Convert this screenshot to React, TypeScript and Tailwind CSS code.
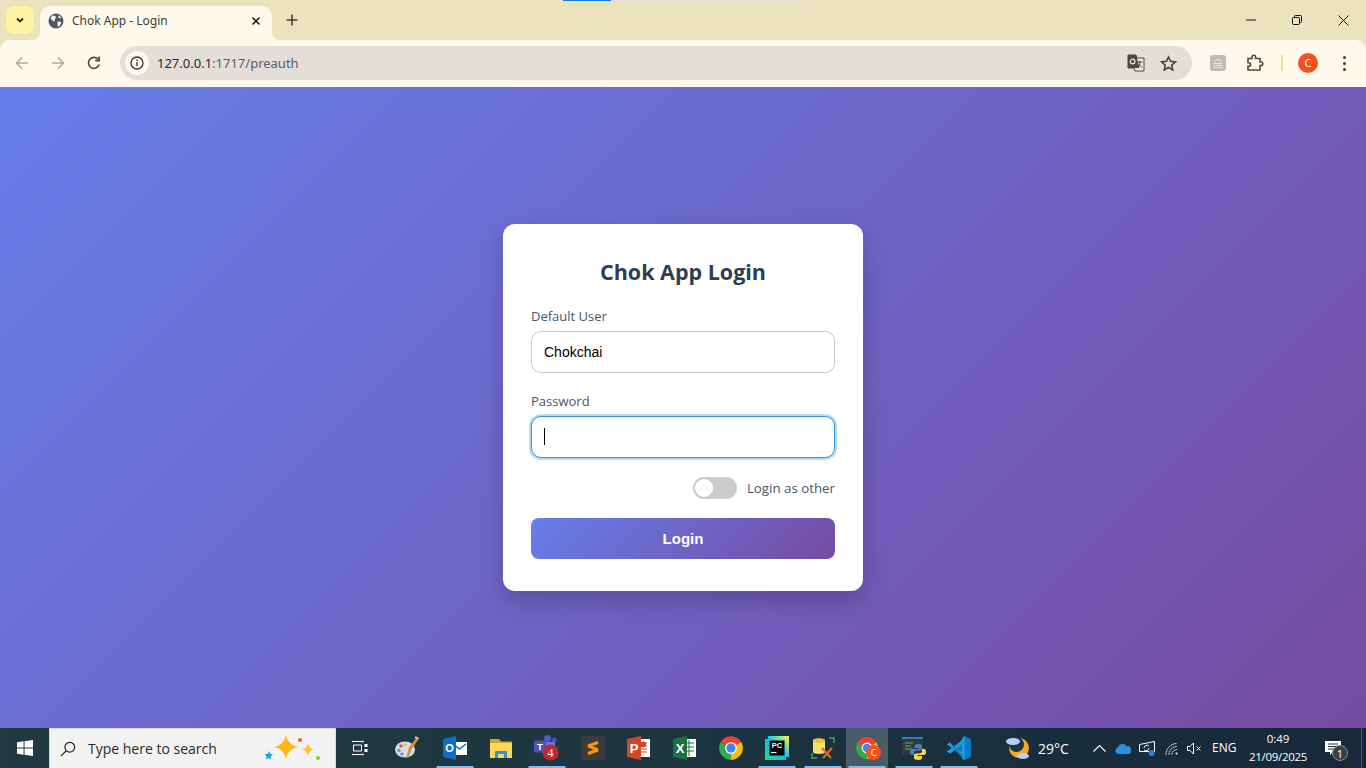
import React from "react";

const UI_FONT = "font-['Open_Sans','Noto_Sans',sans-serif]";

function ChromeLogo({ size = 26 }: { size?: number }) {
  return (
    <svg width={size} height={size} viewBox="0 0 24 24">
      <path d="M12 12L2.5 6.5A11 11 0 0 1 21.5 6.5Z" fill="#ea4335" />
      <path d="M12 12L21.5 6.5A11 11 0 0 1 12 23Z" fill="#fbbc04" />
      <path d="M12 12L12 23A11 11 0 0 1 2.5 6.5Z" fill="#34a853" />
      <circle cx="12" cy="12" r="5.4" fill="#fff" />
      <circle cx="12" cy="12" r="4.3" fill="#4285f4" />
    </svg>
  );
}

function TabStrip() {
  return (
    <div className="relative flex h-10 items-end bg-[#ebe3bd]">
      {/* page load progress at the very top of the window */}
      <div className="absolute left-[563px] top-0 h-px w-12 bg-[#0b7fd6]" />
      <div className="absolute left-[611px] top-0 h-px w-[193px] bg-[#dcdcdc]" />

      <div className="mb-[6px] ml-[6px] flex h-7 w-7 items-center justify-center rounded-lg bg-[#fdf4a3]">
        <svg width="12" height="12" viewBox="0 0 12 12" fill="none" stroke="#2b2a20" strokeWidth="1.8">
          <path d="M3 4.5l3 3 3-3" />
        </svg>
      </div>

      <div className="relative ml-[6px] flex h-[34px] w-[232px] items-center rounded-t-[10px] bg-[#fef9ec] pb-[5px] pl-2 pr-[11px]">
        <div className="absolute -left-[8px] bottom-0 h-2 w-2 bg-[radial-gradient(circle_at_0_0,transparent_8px,#fef9ec_8.5px)]" />
        <div className="absolute -right-[8px] bottom-0 h-2 w-2 bg-[radial-gradient(circle_at_100%_0,transparent_8px,#fef9ec_8.5px)]" />
        <svg width="16" height="16" viewBox="0 0 16 16">
          <circle cx="8" cy="8" r="7.5" fill="#50566a" />
          <path d="M4.2 2.6l3 .4.8 1.8-1.6 1.6.6 1.6-1.6.2L2.6 5.4ZM9.4 8.4l3.4.4.6 1.2-2.4 3.4-1.2.4-.2-2.6Z M10.4 2.2l2.8 2-1 1.2-1.8-.8Z" fill="#fef9ec" />
        </svg>
        <span className="ml-2 flex-1 font-['Noto_Sans',sans-serif] text-[12px] text-[#3f3d33]">Chok App - Login</span>
        <svg width="10" height="10" viewBox="0 0 10 10" stroke="#28261c" strokeWidth="1.6">
          <path d="M1.5 1.5l7 7M8.5 1.5l-7 7" />
        </svg>
      </div>

      <div className="mb-[14px] ml-[14px] flex h-3 w-3 items-center justify-center">
        <svg width="12" height="12" viewBox="0 0 12 12" stroke="#46442f" strokeWidth="1.6">
          <path d="M6 .5v11M.5 6h11" />
        </svg>
      </div>

      <div className="ml-auto mb-[14px] flex h-3 items-center">
        <div className="flex w-[46px] justify-center">
          <svg width="10" height="10" viewBox="0 0 10 10" stroke="#111" strokeWidth="1">
            <path d="M0 5h10" />
          </svg>
        </div>
        <div className="flex w-[46px] justify-center">
          <svg width="10" height="10" viewBox="0 0 10 10" fill="none" stroke="#111" strokeWidth="1">
            <rect x=".5" y="2.5" width="7" height="7" rx="1" />
            <path d="M2.5 2.5V1.4a.9.9 0 0 1 .9-.9h5.2a.9.9 0 0 1 .9.9v5.2a.9.9 0 0 1-.9.9H7.5" />
          </svg>
        </div>
        <div className="flex w-[46px] justify-center">
          <svg width="11" height="11" viewBox="0 0 11 11" stroke="#111" strokeWidth="1">
            <path d="M.5.5l10 10M10.5.5l-10 10" />
          </svg>
        </div>
      </div>
    </div>
  );
}

function Toolbar() {
  return (
    <div className="bg-[#ebe3bd]">
      <div className="flex h-[47px] items-center rounded-t-[10px] bg-[#fef9ec] pb-px pl-1">
        <div className="flex w-9 justify-center">
          <svg width="16" height="16" viewBox="0 0 16 16" fill="none" stroke="#aeaa9d" strokeWidth="1.5">
            <path d="M14 8H2.5M8 2.5L2.5 8 8 13.5" />
          </svg>
        </div>
        <div className="flex w-9 justify-center">
          <svg width="16" height="16" viewBox="0 0 16 16" fill="none" stroke="#aeaa9d" strokeWidth="1.5">
            <path d="M2 8h11.5M8 2.5L13.5 8 8 13.5" />
          </svg>
        </div>
        <div className="flex w-9 justify-center">
          <svg width="16" height="16" viewBox="0 0 16 16" fill="none" stroke="#4d4a3a" strokeWidth="1.7">
            <path d="M13.2 9.6A5.5 5.5 0 1 1 12.4 4.6" />
            <path d="M13.2 1.6v4h-4" />
          </svg>
        </div>

        <div className="ml-2 flex h-[34px] flex-1 items-center rounded-full bg-[#e3dfd8] pl-[5px] pr-[15px]">
          <div className="flex h-6 w-6 items-center justify-center rounded-full bg-[#fef9ec]">
            <svg width="14" height="14" viewBox="0 0 14 14" fill="none" stroke="#38362a" strokeWidth="1.3">
              <circle cx="7" cy="7" r="6" />
              <path d="M7 6v4.2M7 3.6v1.3" />
            </svg>
          </div>
          <span className="ml-2 flex-1 pt-[2px] font-['Noto_Sans',sans-serif] text-[13px] text-[#56606c]">
            <span className="text-[#252a2e]">127.0.0.1</span>:1717/preauth
          </span>
          {/* translate */}
          <svg width="18" height="18" viewBox="0 0 18 18" className="mr-[15px]">
            <path d="M1 1h8l1 3h7v13H8l-1-3H1Z" fill="#eceae3" stroke="#4c4a3e" />
            <path d="M1 1h8l3.5 13H1Z" fill="#4c4a3e" />
            <circle cx="5.6" cy="7.5" r="2.3" fill="none" stroke="#eceae3" strokeWidth="1.2" />
            <path d="M11 8h4.5M13 7v1.5c0 2-1 3.5-2 4.5M12 10l3 3.5" fill="none" stroke="#4c4a3e" />
          </svg>
          <svg width="17" height="17" viewBox="0 0 24 24" fill="none" stroke="#45422f" strokeWidth="2.2">
            <path d="M12 2.8l2.9 6.2 6.7.8-5 4.6 1.4 6.6-6-3.4-6 3.4 1.4-6.6-5-4.6 6.7-.8Z" />
          </svg>
        </div>

        <div className="flex w-[174px] items-center">
          <div className="ml-[18px] flex h-4 w-4 flex-col items-center justify-center gap-px rounded-[3px] bg-[#bdbbb6]">
            <div className="h-[3px] w-[6px] rounded-t-sm border border-b-0 border-[#e5e3de]" />
            <div className="h-px w-[10px] bg-[#e5e3de]" />
            <div className="h-px w-[10px] bg-[#e5e3de]" />
            <div className="h-px w-[10px] bg-[#e5e3de]" />
          </div>
          <svg width="18" height="18" viewBox="0 0 18 18" fill="none" stroke="#4d4a36" strokeWidth="1.6" className="ml-[20px]">
            <path d="M2 4.5h4V3a1.8 1.8 0 0 1 3.6 0v1.5h4.4V8h1a1.8 1.8 0 0 1 0 3.6h-1V16H2v-3.6h.8a1.8 1.8 0 0 0 0-3.6H2Z" />
          </svg>
          <div className="ml-[17px] h-4 w-[2px] bg-[#f5e08a]" />
          <div className="ml-[15px] flex h-5 w-5 items-center justify-center rounded-full bg-[#f4511e] font-['Noto_Sans',sans-serif] text-[11px] text-white">
            C
          </div>
          <div className="ml-[25px] flex flex-col gap-[3px]">
            <div className="h-[3px] w-[3px] rounded-full bg-[#3e3c2e]" />
            <div className="h-[3px] w-[3px] rounded-full bg-[#3e3c2e]" />
            <div className="h-[3px] w-[3px] rounded-full bg-[#3e3c2e]" />
          </div>
        </div>
      </div>
    </div>
  );
}

function LoginCard() {
  return (
    <div className={`w-[360px] rounded-xl bg-white px-7 pb-8 pt-7 shadow-[0_10px_25px_rgba(0,0,0,0.2)] ${UI_FONT}`}>
      <h1 className="mb-[15px] h-10 text-center text-[21.500px] font-bold leading-10 text-[#2c3e50]">Chok App Login</h1>
      <label className="mb-[5px] block h-[19px] text-[13px] leading-[19px] text-[#4a5568]">Default User</label>
      <input
        readOnly
        value="Chokchai"
        className="mb-[19px] block h-[42px] w-full rounded-[10px] border border-[#c4c6cc] bg-white px-3 font-['Liberation_Sans',sans-serif] text-[14px] text-black outline-none"
      />
      <label className="mb-[5px] block h-[19px] text-[13px] leading-[19px] text-[#4a5568]">Password</label>
      <div className="relative mb-[19px]">
        <input
          readOnly
          type="password"
          className="block h-[42px] w-full rounded-[10px] border border-[#3498db] bg-white px-3 text-[14px] outline-none shadow-[0_0_0_2px_rgba(52,152,219,0.35)]"
        />
        <div className="absolute left-[13px] top-[12px] h-[17px] w-px bg-black" />
      </div>
      <div className="mb-5 flex h-[21px] items-center justify-end">
        <div className="flex h-[22px] w-11 items-center rounded-full bg-[#cccccc] pl-[2px]">
          <div className="h-[18px] w-[18px] rounded-full bg-white" />
        </div>
        <span className="ml-[10px] mt-[2px] text-[13.3px] text-[#4a5568]">Login as other</span>
      </div>
      <button className="block h-[41px] w-full rounded-lg bg-[linear-gradient(135deg,#667eea_0%,#764ba2_100%)] pt-px font-['Liberation_Sans',sans-serif] text-[15px] font-bold text-white">
        Login
      </button>
    </div>
  );
}

function TaskButton({
  width,
  underline,
  active,
  children,
}: {
  width: string;
  underline?: boolean;
  active?: boolean;
  children: React.ReactNode;
}) {
  return (
    <div className={`relative flex h-10 shrink-0 items-center justify-center ${width} ${active ? "bg-[#4a5c68]" : ""}`}>
      {children}
      {underline && <div className="absolute bottom-0 left-1/2 h-[2px] w-[37px] -translate-x-1/2 bg-[#7fbdea]" />}
    </div>
  );
}

function Taskbar() {
  return (
    <div className={`flex h-10 items-center bg-[linear-gradient(90deg,#1f3a42_0%,#1d3640_45%,#16283a_100%)] text-white ${UI_FONT}`}>
      <div className="flex h-10 w-[49px] shrink-0 items-center justify-center">
        <svg width="16" height="16" viewBox="0 0 17 17" fill="#fff">
          <path d="M0 2.4l7-1v6.7H0ZM8 1.2L17 0v8.1H8ZM0 9h7v6.7l-7-1ZM8 9h9v8l-9-1.2Z" />
        </svg>
      </div>
      <div className="flex h-10 w-[287px] shrink-0 items-center border border-b-0 border-[#d9d9d9] bg-[#f2f2f2] pl-[10px]">
        <svg width="16" height="16" viewBox="0 0 18 18" fill="none" stroke="#222" strokeWidth="1.3">
          <circle cx="11" cy="7" r="5.5" />
          <path d="M7 11l-6 6" />
        </svg>
        <span className="ml-[12px] text-[14px] text-[#2a2a2a]">Type here to search</span>
        <svg width="64" height="30" viewBox="0 0 64 30" className="ml-[44px]">
          <path d="M25 1Q27 11 37 13Q27 15 25 25Q23 15 13 13Q23 11 25 1Z" fill="#fdb913" />
          <path d="M47 9Q48 14.500 53 15.500Q48 16.500 47 22Q46 16.500 41 15.500Q46 14.500 47 9Z" fill="#fdc02f" />
          <path d="M8 17l1 2.800 3 .7-2.300 1.800.4 3.200-2.500-1.600-2.700 1.500.7-3-2.100-2.200 3-.3Z" fill="#1fa2ea" />
          <circle cx="39" cy="6" r="2" fill="#e8622a" />
          <circle cx="57" cy="24" r="2" fill="#8cc63f" />
        </svg>
      </div>

      <TaskButton width="w-[47px]">
        <svg width="16" height="16" viewBox="0 0 16 16" fill="none" stroke="#fff" strokeWidth="1">
          <path d="M0 1.500h11M0 14.500h11M1.500 5h8v6h-8Z" />
          <path d="M0 .5v2M11 .5v2M0 13.500v2M11 13.500v2" />
          <rect x="13" y="4.500" width="2" height="2" fill="#fff" />
          <rect x="13" y="9.500" width="2" height="2" fill="#fff" />
        </svg>
      </TaskButton>
      <TaskButton width="w-[48px]">
        <svg width="26" height="26" viewBox="0 0 26 26">
          <ellipse cx="11" cy="14.500" rx="10" ry="8" fill="#d8dce6" />
          <circle cx="7" cy="11" r="1.800" fill="#e05a4b" />
          <circle cx="11.500" cy="9.800" r="1.600" fill="#f0b840" />
          <circle cx="5" cy="15.500" r="1.700" fill="#58b368" />
          <circle cx="8" cy="19" r="1.600" fill="#4a90d9" />
          <path d="M23 2l2 1.500-7 10L14 23l-1.500-1 2.500-9.500Z" fill="#d98b2f" />
          <path d="M21.500 1l3.500 2-1.500 2-3-2Z" fill="#efb26b" />
        </svg>
      </TaskButton>
      <TaskButton width="w-[47px]" underline>
        <svg width="24" height="24" viewBox="0 0 24 24">
          <rect x="9" y="6" width="15" height="13" fill="#fff" />
          <path d="M10 8l6.500 5L23 8" fill="none" stroke="#0a6cc2" strokeWidth="1.400" />
          <path d="M0 3l13-3v24L0 21Z" fill="#0a6cc2" />
          <text x="6.500" y="16" textAnchor="middle" fontSize="11" fontWeight="700" fill="#fff" fontFamily="Liberation Sans">O</text>
        </svg>
      </TaskButton>
      <TaskButton width="w-[46px]">
        <svg width="22" height="20" viewBox="0 0 22 20">
          <path d="M0 1h9l2 2.500h11V8H0Z" fill="#d9a42a" />
          <path d="M0 5h22v15H0Z" fill="#fdd75c" />
          <path d="M5 13h12v7h-3v-4H8v4H5Z" fill="#2e95d6" />
        </svg>
      </TaskButton>
      <TaskButton width="w-[46px]" underline>
        <svg width="28" height="28" viewBox="0 0 28 28">
          <circle cx="14.500" cy="4.500" r="3.500" fill="#5059c9" />
          <circle cx="21" cy="6" r="2.500" fill="#4650b8" />
          <path d="M10 8h12v9a6 6 0 0 1-12 0Z" fill="#6a72d8" />
          <rect x="1" y="6.500" width="12" height="12" rx="1.500" fill="#4b53bc" />
          <text x="7" y="16.200" textAnchor="middle" fontSize="9.500" fontWeight="700" fill="#fff" fontFamily="Liberation Sans">T</text>
          <circle cx="17.500" cy="18.500" r="8" fill="#c4262e" />
          <text x="17.500" y="23" textAnchor="middle" fontSize="12" fill="#fff" fontFamily="Liberation Serif">4</text>
        </svg>
      </TaskButton>
      <TaskButton width="w-[46px]">
        <svg width="24" height="24" viewBox="0 0 24 24">
          <rect width="24" height="24" rx="2" fill="#3b3b3b" />
          <path d="M7 9.800L17 6.500M7 9.800L17 14M17 14L7 17.500" fill="none" stroke="#ff9800" strokeWidth="3" />
        </svg>
      </TaskButton>
      <TaskButton width="w-[46px]">
        <svg width="24" height="24" viewBox="0 0 24 24">
          <rect x="10" y="3" width="13" height="18" fill="#fff" />
          <path d="M13 7h7M13 10h7M13 13h7M13 16h7" stroke="#d24726" />
          <circle cx="16" cy="8.500" r="3" fill="#d24726" />
          <path d="M0 3l14-3v24L0 21Z" fill="#d24726" />
          <text x="7" y="17" textAnchor="middle" fontSize="13" fontWeight="700" fill="#fff" fontFamily="Liberation Sans">P</text>
        </svg>
      </TaskButton>
      <TaskButton width="w-[46px]">
        <svg width="24" height="24" viewBox="0 0 24 24">
          <rect x="10" y="3" width="13" height="18" fill="#fff" />
          <path d="M12 7h9M12 11h9M12 15h9M16 4v16" stroke="#1d7044" />
          <path d="M0 3l14-3v24L0 21Z" fill="#1d7044" />
          <text x="7" y="17" textAnchor="middle" fontSize="13" fontWeight="700" fill="#fff" fontFamily="Liberation Sans">X</text>
        </svg>
      </TaskButton>
      <TaskButton width="w-[46px]">
        <ChromeLogo size={26} />
      </TaskButton>
      <TaskButton width="w-[46px]" underline>
        <svg width="24" height="24" viewBox="0 0 24 24">
          <defs>
            <linearGradient id="pc" x1="0" y1="1" x2="1" y2="0">
              <stop offset="0" stopColor="#21d789" />
              <stop offset=".5" stopColor="#07c3f2" />
              <stop offset="1" stopColor="#fcf84a" />
            </linearGradient>
          </defs>
          <path d="M3 0h21v21h-3v3H0V3h3Z" fill="url(#pc)" />
          <rect x="4.500" y="4.500" width="15" height="15" fill="#000" />
          <text x="12" y="12" textAnchor="middle" fontSize="7.500" fontWeight="700" fill="#fff" fontFamily="Liberation Sans">PC</text>
          <path d="M6 16.500h5.500" stroke="#fff" strokeWidth="1.200" />
        </svg>
      </TaskButton>
      <TaskButton width="w-[46px]" underline>
        <svg width="24" height="24" viewBox="0 0 24 24">
          <path d="M1 17v5h5M18 2h5v5" fill="none" stroke="#4aa564" strokeWidth="1.400" />
          <path d="M2 4.500C2 2 14 2 14 4.500V16c0 2.500-12 2.500-12 0Z" fill="#f7df70" />
          <ellipse cx="8" cy="4.500" rx="6" ry="2.300" fill="#e6c23e" />
          <path d="M11 12l9 10M21 12l-9 10" stroke="#d9701e" strokeWidth="2" />
        </svg>
      </TaskButton>
      <TaskButton width="w-[42px]" active underline>
        <ChromeLogo size={24} />
        <div className="absolute left-[20px] top-[17px] flex h-[15px] w-[15px] items-center justify-center rounded-full bg-[#f4511e] text-[9px] leading-none">
          C
        </div>
      </TaskButton>
      <div className="w-[3px] shrink-0" />
      <TaskButton width="w-[46px]" underline>
        <svg width="24" height="24" viewBox="0 0 24 24">
          <rect y="1" width="21" height="18" fill="#2f3a40" />
          <rect y="1" width="21" height="2" fill="#2f7fb8" />
          <path d="M3 7h8M3 10h6M3 13h7" stroke="#5c8a5c" strokeWidth="1.300" />
          <path d="M16 8c-3 0-3.500 1-3.500 2.500V12H17v1h-6c-2 0-3 1.200-3 3s1 3 2.500 3H12v-2.300c0-1.200 1-2.200 2.300-2.200h3.600c1.200 0 2.100-1 2.100-2.200v-2.300C20 8.800 18.500 8 16 8Z" fill="#3d85c6" />
          <path d="M16.500 24c3 0 3.500-1 3.500-2.500V20h-4.500v-1h6c2 0 2.500-1.200 2.500-3s-.5-3-2-3H20v2.300c0 1.200-1 2.200-2.300 2.200h-3.600c-1.200 0-2.100 1-2.100 2.200v2.300c0 1.200 1.500 2 4.500 2Z" fill="#fbd84b" />
        </svg>
      </TaskButton>
      <TaskButton width="w-[44px]" underline>
        <svg width="24" height="24" viewBox="0 0 24 24">
          <path d="M17.500 0L24 3v18l-6.500 3L7 13.500Z" fill="#0a7cc4" />
          <path d="M17.500 0v24l-2-1V2Z" fill="#2aa3e8" />
          <path d="M3 6.500L0 8.500 5 12l-5 3.500 3 2L17.500 5.500V2L7 12" fill="#1f9ae0" />
          <path d="M0 15.500l3 2 14.500-11V2.500L0 15.500Z M0 8.500l3-2 14.500 15v-4Z" fill="#1f9ae0" />
        </svg>
      </TaskButton>

      {/* weather and tray, pushed to the right end */}
      <div className="ml-[25px] flex shrink-0 items-center">
        <svg width="24" height="26" viewBox="0 0 24 26">
          <circle cx="13" cy="13" r="10" fill="#f5a623" />
          <circle cx="10.500" cy="9.500" r="7.500" fill="#1d3640" />
          <ellipse cx="7" cy="6.500" rx="7" ry="3.500" fill="#b5d3f0" />
          <ellipse cx="17" cy="21" rx="6" ry="3" fill="#b5d3f0" />
        </svg>
        <span className="ml-[8px] w-[30px] whitespace-nowrap text-[14px]">29°C</span>
      </div>
      <svg width="13" height="8" viewBox="0 0 13 8" fill="none" stroke="#fff" strokeWidth="1.100" className="ml-[25px]">
        <path d="M.5 7.500l6-6 6 6" />
      </svg>
      <svg width="16" height="11" viewBox="0 0 16 11" className="ml-[9px]">
        <path d="M3.500 11a3.300 3.300 0 0 1-.6-6.500 4.500 4.500 0 0 1 8.400-1.200A3.800 3.800 0 0 1 16 8.500c0 1.500-1 2.500-2.500 2.500Z" fill="#2c8fe0" />
      </svg>
      <svg width="16" height="15" viewBox="0 0 16 15" fill="none" stroke="#fff" strokeWidth="1" className="ml-[8px]">
        <path d="M.5 3.500L15.500.5v10h-15Z" />
        <path d="M5 7a3 3 0 0 1 5-2M10 7a3 3 0 0 1-5 2" />
        <circle cx="12.500" cy="12" r="3" fill="#2f7fd0" stroke="none" />
      </svg>
      <svg width="14" height="13" viewBox="0 0 14 13" fill="none" stroke="#fff" strokeWidth="1" strokeDasharray="1.500 .6" className="ml-[10px]">
        <path d="M1 12.500A11 11 0 0 1 12 1.500M4 12.500A8 8 0 0 1 12 4.500M7 12.500A5 5 0 0 1 12 7.500" />
        <circle cx="11.500" cy="11.500" r="1" fill="#fff" stroke="none" />
      </svg>
      <svg width="15" height="13" viewBox="0 0 15 13" fill="none" stroke="#fff" strokeWidth="1" className="ml-[8px]">
        <path d="M.5 4.500h2.500L6.500 1v11L3 8.500H.5Z" />
        <path d="M9.500 4.500l4 4M13.500 4.500l-4 4" />
      </svg>
      <span className="ml-[10px] w-[25px] text-[12px]">ENG</span>
      <div className="ml-[11px] flex w-[60px] flex-col items-center text-[11.500px] leading-[18px]">
        <span>0:49</span>
        <span className="whitespace-nowrap tracking-[-0.3px]">21/09/2025</span>
      </div>
      <div className="relative ml-[17px] flex h-10 w-[24px] items-center">
        <svg width="16" height="15" viewBox="0 0 16 15">
          <path d="M0 0h16v11H8l-3 3v-3H0Z" fill="#fff" />
          <path d="M3 3h10M3 5.500h10M3 8h7" stroke="#1a2d3a" />
        </svg>
        <div className="absolute left-[7px] top-[17px] flex h-4 w-4 items-center justify-center rounded-full border border-[#888] bg-[#3a3f44] text-[11px] leading-none">
          1
        </div>
      </div>
      <div className="ml-auto mr-[4px] h-10 w-px bg-[#4b5a66]" />
    </div>
  );
}

export default function App() {
  return (
    <div className="flex h-[768px] w-[1366px] flex-col overflow-hidden">
      <TabStrip />
      <Toolbar />
      <main className="flex flex-1 items-center justify-center bg-[linear-gradient(135deg,#667eea_0%,#764ba2_100%)]">
        <LoginCard />
      </main>
      <Taskbar />
    </div>
  );
}
